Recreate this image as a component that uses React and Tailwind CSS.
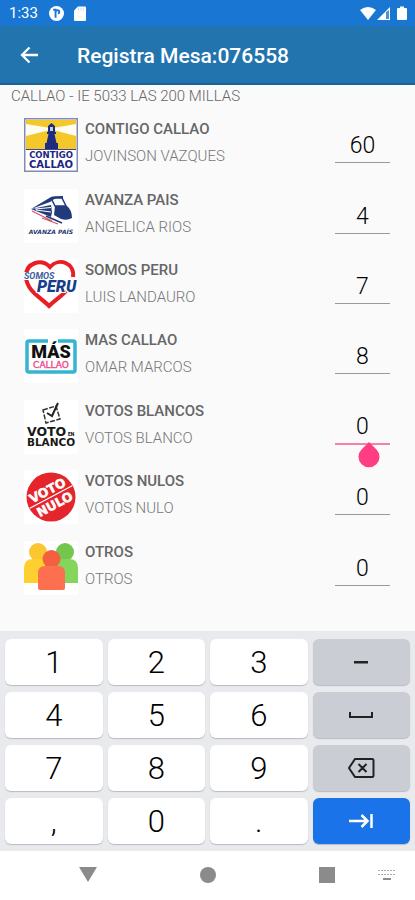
import React from "react";

const svgFont = "Roboto, 'Liberation Sans', sans-serif";
const wideFont = "'DejaVu Sans', sans-serif";

function ContigoLogo() {
  return (
    <svg viewBox="0 0 54 54" className="size-full" aria-hidden="true">
      <rect width="54" height="54" fill="#8289b5" />
      <rect x="1.500" y="1.500" width="51" height="51" fill="#fff" />
      <rect x="2" y="2" width="50" height="29" fill="#f4c82a" />
      <path d="M2 6 L26 10 L26 12 L2 18 Z M52 6 L29 10 L29 12 L52 18 Z" fill="#fffdf0" />
      <path d="M27.500 5 L31 8 L31 9 L24 9 L24 8 Z M24 9 h7 v5 h1 v2 h-1.500 l2 9 h1.500 v6 h-13 v-6 h1.500 l2 -9 H23 v-2 h1 Z" fill="#1c2c7e" />
      <rect x="26" y="9" width="3" height="4" fill="#c9cce0" />
      <rect x="2" y="31" width="50" height="1" fill="#3b4790" />
      <text x="27" y="40" textAnchor="middle" fontFamily={wideFont} fontWeight="700" fontSize="8.500" fill="#1c2580">CONTIGO</text>
      <text x="27" y="49.500" textAnchor="middle" fontFamily={wideFont} fontWeight="700" fontSize="10" fill="#1c2580">CALLAO</text>
    </svg>
  );
}

function AvanzaLogo() {
  return (
    <svg viewBox="0 0 54 54" className="size-full" aria-hidden="true">
      <rect width="54" height="54" fill="#fff" />
      <path d="M7 20 L27 8 Q30 7 39 7 L39 10 L30 10 L26 13 Z" fill="#213a7c" />
      <path d="M7 20 L27 16 L28 23 L27 28 Z" fill="#213a7c" />
      <path d="M11 20 L27 18.500 M12 21 L27 23" stroke="#fff" strokeWidth="1.200" />
      <path d="M28 11 Q29 9 32 9 L38 9 L42 17 L31 17 Z" fill="#fff" stroke="#213a7c" strokeWidth="1.500" />
      <path d="M31 17 H43 Q48 21 48 29 Q43 32 37 30 L30 26 Z" fill="#213a7c" />
      <path d="M8 22 L28 32 M18 29 L34 35" stroke="#d95369" strokeWidth="1.300" />
      <path d="M22 27 L38 34" stroke="#213a7c" strokeWidth="1.500" />
      <text x="27" y="45" textAnchor="middle" fontFamily={wideFont} fontStyle="italic" fontWeight="700" fontSize="6" fill="#27396f">AVANZA PAÍS</text>
    </svg>
  );
}

function SomosLogo() {
  return (
    <svg viewBox="0 0 54 54" className="size-full overflow-visible" aria-hidden="true">
      <rect width="54" height="54" fill="#fff" />
      <path d="M49 18 C51 4 35 -2 26 8 C17 -1 2 4 2 17 C2 31 15 37 25 47 C32 40 38 37 42 32" fill="none" stroke="#e91d24" strokeWidth="4" />
      <rect x="0" y="13" width="33" height="8" fill="#fff" />
      <text x="0" y="20" fontFamily={svgFont} fontStyle="italic" fontWeight="700" fontSize="9" fill="#3a5d9c">SOMOS</text>
      <text x="13" y="33" fontFamily={svgFont} fontStyle="italic" fontWeight="900" fontSize="16" fill="#173e8c" stroke="#fff" strokeWidth="2" paintOrder="stroke">PERU</text>
    </svg>
  );
}

function MasLogo() {
  return (
    <svg viewBox="0 0 54 54" className="size-full" aria-hidden="true">
      <rect width="54" height="54" fill="#fff" />
      <rect x="3" y="12" width="48" height="31" rx="2" fill="#fff" stroke="#35b4d1" strokeWidth="3.500" />
      <rect x="24" y="9" width="10" height="6" fill="#fff" />
      <text x="27" y="29" textAnchor="middle" fontFamily={svgFont} fontWeight="900" fontSize="18" fill="#111">MÁS</text>
      <text x="27" y="39" textAnchor="middle" fontFamily={wideFont} fontSize="9" fill="#ee4f8e" stroke="#ee4f8e" strokeWidth="0.400">CALLAO</text>
    </svg>
  );
}

function BlancoLogo() {
  return (
    <svg viewBox="0 0 54 54" className="size-full" aria-hidden="true">
      <rect width="54" height="54" fill="#fff" />
      <path d="M19 10 L32 6 L36 19 L22 23 Z" fill="none" stroke="#333" strokeWidth="1.500" strokeDasharray="5 1.500" />
      <path d="M23 13 L28 16 L34 3" fill="none" stroke="#222" strokeWidth="2" />
      <text x="3" y="36" fontFamily={wideFont} fontWeight="700" fontSize="12.500" fill="#181818">VOTO</text>
      <text x="44" y="36" fontFamily={svgFont} fontWeight="900" fontSize="5" fill="#181818">EN</text>
      <text x="27" y="46" textAnchor="middle" fontFamily={wideFont} fontWeight="700" fontSize="10.500" fill="#181818">BLANCO</text>
    </svg>
  );
}

function NuloLogo() {
  return (
    <svg viewBox="0 0 54 54" className="size-full" aria-hidden="true">
      <rect width="54" height="54" fill="#fff" />
      <circle cx="27" cy="27" r="24.500" fill="#e4252c" />
      <g transform="rotate(-28 27 27)">
        <path d="M3 27 H51" stroke="#fff" strokeWidth="1.200" />
        <text x="27" y="24" textAnchor="middle" fontFamily={wideFont} fontWeight="700" fontSize="12.500" fill="#fff" stroke="#fff" strokeWidth="0.500">VOTO</text>
        <text x="27" y="39.500" textAnchor="middle" fontFamily={wideFont} fontWeight="700" fontSize="12.500" fill="#fff" stroke="#fff" strokeWidth="0.500">NULO</text>
      </g>
    </svg>
  );
}

function OtrosLogo() {
  return (
    <svg viewBox="0 0 54 54" className="size-full" aria-hidden="true">
      <rect width="54" height="54" fill="#fff" />
      <circle cx="14" cy="11" r="9" fill="#fbc62f" />
      <path d="M0 42 V27 Q0 18 9 18 H19 Q27 18 27 26 V42 Z" fill="#fdd02f" />
      <circle cx="41" cy="11" r="9" fill="#74c64f" />
      <path d="M27 42 V26 Q27 18 35 18 H45 Q54 18 54 27 V42 Z" fill="#85d45c" />
      <circle cx="27.500" cy="18" r="9" fill="#f4603f" />
      <path d="M14 47 V32 Q14 25 21 25 H34 Q41 25 41 32 V47 Q41 49 39 49 H16 Q14 49 14 47 Z" fill="#fc7050" />
    </svg>
  );
}

const parties = [
  { id: "contigo", name: "CONTIGO CALLAO", person: "JOVINSON VAZQUES", votes: "60", Logo: ContigoLogo },
  { id: "avanza", name: "AVANZA PAIS", person: "ANGELICA RIOS", votes: "4", Logo: AvanzaLogo },
  { id: "somos", name: "SOMOS PERU", person: "LUIS LANDAURO", votes: "7", Logo: SomosLogo },
  { id: "mas", name: "MAS CALLAO", person: "OMAR MARCOS", votes: "8", Logo: MasLogo },
  { id: "blancos", name: "VOTOS BLANCOS", person: "VOTOS BLANCO", votes: "0", Logo: BlancoLogo, active: true },
  { id: "nulos", name: "VOTOS NULOS", person: "VOTOS NULO", votes: "0", Logo: NuloLogo },
  { id: "otros", name: "OTROS", person: "OTROS", votes: "0", Logo: OtrosLogo },
];

function PartyRow({ id, name, person, votes, Logo, active }) {
  return (
    <li className="flex flex-1 items-center pr-[25px] pl-6">
      <div className="size-[54px] shrink-0">
        <Logo />
      </div>
      <label htmlFor={id} className="ml-[7px] flex-1 pb-1">
        <span className="block text-[15px] leading-[27px] font-medium text-[#666]">{name}</span>
        <span className="block text-[15px] leading-[27px] font-light text-[#777]">{person}</span>
      </label>
      <div className="relative w-[55px]">
        <input
          id={id}
          type="text"
          inputMode="numeric"
          defaultValue={votes}
          className={
            active
              ? "block h-9 w-full border-b-2 border-[#f283a8] pt-0.5 text-center text-[23px] font-light text-black outline-none"
              : "block h-9 w-full border-b border-[#999] pt-0.5 text-center text-[23px] font-light text-black outline-none"
          }
        />
        {active && (
          <svg viewBox="0 0 22 26" className="absolute top-[33px] left-[23px] h-[26px] w-[22px]" aria-hidden="true">
            <path d="M11 0 L18.500 7.500 A10.500 10.500 0 1 1 3.500 7.500 Z" fill="#ff3d82" />
          </svg>
        )}
      </div>
    </li>
  );
}

const keyBase = "flex h-[46px] items-center justify-center rounded-md shadow-[0_1px_1px_#b9bbc0]";

function NumberKey({ children }) {
  return <button type="button" className={keyBase + " bg-white pt-[3px] text-[31px] font-light text-black"}>{children}</button>;
}

function ActionKey({ label, children }) {
  return <button type="button" aria-label={label} className={keyBase + " bg-[#cbcdd4] text-[#222]"}>{children}</button>;
}

export default function App() {
  return (
    <div className="flex min-h-screen flex-col bg-[#fafafa] font-[Roboto,'Liberation_Sans',sans-serif]">
      <div className="flex h-[26px] items-center bg-[#1976d2] pr-[7px] pl-[9px] text-white">
        <span className="text-[15px]">1:33</span>
        <svg viewBox="0 0 16 16" className="ml-[11px] size-[15px]" aria-hidden="true">
          <circle cx="8" cy="8" r="8" fill="#fff" />
          <path d="M4.500 4 H7 V12.500 M7 7 Q7 4.500 9 4.500 Q11 4.500 11 6.500 Q11 8 9.500 8" fill="none" stroke="#1976d2" strokeWidth="2" />
        </svg>
        <svg viewBox="0 0 12 15" className="ml-[10px] h-[15px] w-3" aria-hidden="true">
          <path d="M4 0.500 H11 Q12 0.500 12 1.500 V14 Q12 15 11 15 H1 Q0 15 0 14 V4.500 Z" fill="#fff" />
          <path d="M4.500 2 V4.500 M7 2 V4.500 M9.500 2 V4.500" stroke="#c3dbf4" strokeWidth="1" />
        </svg>
        <svg viewBox="0 0 48 15" className="ml-auto h-[15px] w-12" aria-hidden="true">
          <path d="M0 4 Q8 -2 16 4 L8 14 Z" fill="#fff" />
          <path d="M17 14 L30 1 V14 Z" fill="#fff" />
          <path d="M26 6 V13 H29 V4" fill="#4a92dc" />
          <path d="M38 2 H40 V0.500 H44 V2 H46 Q47 2 47 3 V13 Q47 14 46 14 H38 Q37 14 37 13 V3 Q37 2 38 2 Z" fill="#fff" />
        </svg>
      </div>

      <header className="flex h-[59px] items-center border-b-2 border-[#1c6196] bg-[#2274ae] text-white">
        <button type="button" aria-label="Volver" className="ml-5">
          <svg viewBox="0 0 18 18" className="size-[18px]" fill="none" stroke="currentColor" strokeWidth="2.300" aria-hidden="true">
            <path d="M18 9 H2 M9.500 1.500 L2 9 L9.500 16.500" />
          </svg>
        </button>
        <h1 className="ml-[39px] pt-1 text-[21px] font-medium">Registra Mesa:076558</h1>
      </header>

      <main className="flex flex-1 flex-col">
        <p className="pt-px pl-[11px] text-[15px] leading-5 font-light text-[#666]">CALLAO - IE 5033 LAS 200 MILLAS</p>
        <ul className="flex flex-1 flex-col pt-1 pb-7">
          {parties.map((party) => (
            <PartyRow key={party.id} {...party} />
          ))}
        </ul>
      </main>

      <section aria-label="Teclado" className="grid grid-cols-4 gap-x-[5px] gap-y-[7px] bg-[#e8eaed] px-[5px] pt-2 pb-[7px]">
        <NumberKey>1</NumberKey>
        <NumberKey>2</NumberKey>
        <NumberKey>3</NumberKey>
        <ActionKey label="Guion">
          <svg viewBox="0 0 14 4" className="h-1 w-[14px]"><rect y="1" width="14" height="2.500" fill="currentColor" /></svg>
        </ActionKey>
        <NumberKey>4</NumberKey>
        <NumberKey>5</NumberKey>
        <NumberKey>6</NumberKey>
        <ActionKey label="Espacio">
          <svg viewBox="0 0 24 8" className="h-2 w-6" fill="none" stroke="currentColor" strokeWidth="2"><path d="M1 1 V6 H23 V1" /></svg>
        </ActionKey>
        <NumberKey>7</NumberKey>
        <NumberKey>8</NumberKey>
        <NumberKey>9</NumberKey>
        <ActionKey label="Borrar">
          <svg viewBox="0 0 28 22" className="h-[22px] w-7" fill="none" stroke="currentColor" strokeWidth="2">
            <path d="M8 2 H25 Q26.500 2 26.500 3.500 V18.500 Q26.500 20 25 20 H8 L2 11 Z M11.500 7 L19.500 15 M19.500 7 L11.500 15" />
          </svg>
        </ActionKey>
        <NumberKey>,</NumberKey>
        <NumberKey>0</NumberKey>
        <NumberKey>.</NumberKey>
        <button type="button" aria-label="Siguiente" className={keyBase + " bg-[#1a73e8] text-white"}>
          <svg viewBox="0 0 24 14" className="h-[14px] w-6" fill="none" stroke="currentColor" strokeWidth="2.500">
            <path d="M0 7 H18 M12.500 1 L18.500 7 L12.500 13 M22.500 0 V14" />
          </svg>
        </button>
      </section>

      <nav className="flex h-[49px] items-center bg-white pr-[19px] pb-0.5 pl-[79px] text-[#8b8b8b]">
        <div className="flex flex-1 items-center justify-between">
          <button type="button" aria-label="Ocultar teclado">
            <svg viewBox="0 0 18 15" className="h-[15px] w-[18px]"><path d="M0 0 H18 L9 15 Z" fill="currentColor" /></svg>
          </button>
          <button type="button" aria-label="Inicio" className="size-4 rounded-full bg-current" />
          <button type="button" aria-label="Recientes" className="size-4 bg-current" />
        </div>
        <button type="button" aria-label="Cambiar teclado" className="ml-[43px]">
          <svg viewBox="0 0 18 10" className="h-[10px] w-[18px]" fill="none" stroke="currentColor">
            <path d="M0 0.500 H18 M0 4.500 H18" strokeDasharray="2 1" opacity="0.700" />
            <path d="M5 9 H13" strokeWidth="2" />
          </svg>
        </button>
      </nav>
    </div>
  );
}
